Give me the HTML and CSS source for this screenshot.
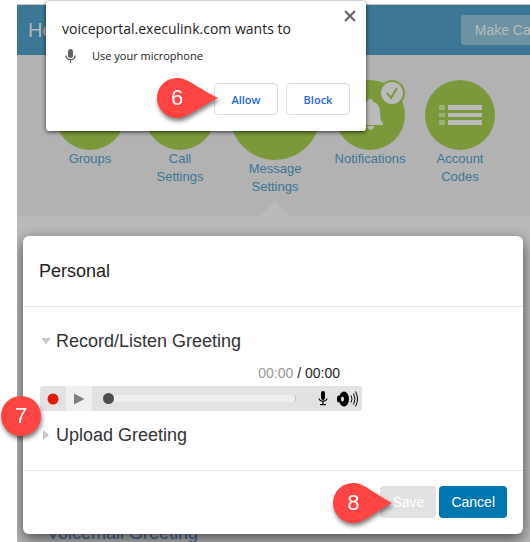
FILE: index.html
```html
<!DOCTYPE html>
<html lang="en">
<head>
    <meta charset="UTF-8">
    <title>Voice Portal: Message Settings</title>
    <meta name="viewport" content="width=device-width, initial-scale=1">
    <link rel="stylesheet" href="styles.css">
</head>
<body>

<div class="portal">
    <div class="page">
        <header class="topbar">
            <div class="title">Home</div>
            <button class="call-button" type="button">Make Call</button>
        </header>

        <nav class="nav">
            <a class="nav-item" href="#groups">
                <span class="circle"></span>
                Groups
            </a>
            <a class="nav-item" href="#call">
                <span class="circle"></span>
                Call<br>Settings
            </a>
            <a class="nav-item active" href="#message">
                <span class="circle"></span>
                Message<br>Settings
            </a>
            <a class="nav-item" href="#notifications">
                <span class="circle">
                    <svg width="70" height="70" viewBox="0 0 70 70">
                        <path fill="#bababa" d="M35 19c2 0 3 1 3 3c5 1 7 5 7 10c0 7 1 9 3 11v2H22v-2c2-2 3-4 3-11c0-5 2-9 7-10c0-2 1-3 3-3zM32 46h7c0 5-7 5-7 0z"/>
                        <circle cx="57" cy="13" r="12" fill="#bababa" stroke="#7b993a" stroke-width="2"/>
                        <path fill="none" stroke="#7b993a" stroke-width="2" d="M52 13l4 5l6-10"/>
                    </svg>
                </span>
                Notifications
            </a>
            <a class="nav-item" href="#codes">
                <span class="circle">
                    <svg width="70" height="70" viewBox="0 0 70 70">
                        <path fill="#a2b076" d="M14 25h6v5h-6zM14 33h6v4h-6zM14 40h6v5h-6z"/>
                        <path fill="#bababa" d="M23 25h34v5H23zM23 33h34v4H23zM23 40h34v5H23z"/>
                    </svg>
                </span>
                Account<br>Codes
            </a>
        </nav>

        <a class="background-link" href="#voicemail">Voicemail Greeting</a>
    </div>

    <div class="modal" role="dialog" aria-labelledby="modal-title">
        <div class="modal-header" id="modal-title">Personal</div>
        <div class="modal-body">
            <details open>
                <summary>Record/Listen Greeting</summary>
                <div class="time"><span class="elapsed">00:00</span> / 00:00</div>
                <div class="player">
                    <button class="player-button" type="button" aria-label="Record">
                        <svg width="12" height="12" viewBox="0 0 12 12"><circle cx="6" cy="6" r="5.5" fill="#e51b00"/></svg>
                    </button>
                    <button class="player-button play" type="button" aria-label="Play">
                        <svg width="12" height="12" viewBox="0 0 12 12"><path fill="#808080" d="M1 .5L11.500 6L1 11.500z"/></svg>
                    </button>
                    <input class="seek" type="range" min="0" max="100" value="0" aria-label="Position">
                    <svg class="mic" width="10" height="15" viewBox="0 0 10 15">
                        <rect x="3" y="0" width="4" height="9" rx="2"/>
                        <path fill="none" stroke="#000" stroke-width="1.200" d="M1 7.500C1.500 11 8.500 11 9 7.500M5 10v3.500M2 13.700h6"/>
                    </svg>
                    <svg class="speaker" width="22" height="16" viewBox="0 0 22 16">
                        <rect x="0" y="4.500" width="4" height="7" rx="2"/>
                        <ellipse cx="7" cy="8" rx="5" ry="7.500"/>
                        <ellipse cx="5.500" cy="8" rx="1.500" ry="2.500" fill="#e2e2e2"/>
                        <path fill="none" stroke="#000" d="M14 4.500q2 3.500 0 7M16.500 2.500q3 5.500 0 11M18.500 .5q4 7.500 0 15"/>
                    </svg>
                </div>
            </details>
            <details>
                <summary>Upload Greeting</summary>
            </details>
        </div>
        <div class="modal-footer">
            <div class="marked">
                <button class="button" type="button" disabled>Save</button>
                <div class="pin pin-save">
                    <svg width="62" height="42" viewBox="0 0 62 42"><path fill="#ff4444" d="M21 1C32 1 38 9 60 21C38 33 32 41 21 41A20 20 0 0 1 21 1z"/></svg>
                    <span>8</span>
                </div>
            </div>
            <button class="button primary" type="button">Cancel</button>
        </div>
    </div>
</div>

<div class="permission" role="dialog" aria-labelledby="permission-title">
    <button class="close" type="button" aria-label="Close">
        <svg width="12" height="12" viewBox="0 0 12 12"><path stroke="#5f6368" stroke-width="2" d="M1 1l10 10M11 1L1 11"/></svg>
    </button>
    <div class="permission-title" id="permission-title">voiceportal.execulink.com wants to</div>
    <div class="permission-row">
        <svg width="18" height="16" viewBox="0 0 18 16">
            <rect x="6" y="1" width="5" height="9" rx="2.500" fill="#5f6368"/>
            <path fill="none" stroke="#5f6368" stroke-width="1.300" d="M4 7.500c0 5.500 9 5.500 9 0M8.500 11.500V15"/>
        </svg>
        Use your microphone
    </div>
    <div class="permission-actions">
        <div class="marked">
            <button class="permission-button" type="button">Allow</button>
            <div class="pin pin-allow">
                <svg width="62" height="42" viewBox="0 0 62 42"><path fill="#ff4444" d="M21 1C32 1 38 9 62 21C38 33 32 41 21 41A20 20 0 0 1 21 1z"/></svg>
                <span>6</span>
            </div>
        </div>
        <button class="permission-button" type="button">Block</button>
    </div>
</div>

<div class="pin pin-player">
    <svg width="42" height="42" viewBox="0 0 42 42"><circle cx="21" cy="21" r="20" fill="#ff4444"/></svg>
    <span>7</span>
</div>

</body>
</html>
```
FILE: styles.css
```css
* {
    box-sizing: border-box;
}

body {
    margin: 0;
    height: 100vh;
    overflow: hidden;
    background: #fff;
    font-family: "Liberation Sans", Arial, sans-serif;
    font-size: 14px;
    color: #222;
}

button {
    font-family: inherit;
    cursor: pointer;
}

a {
    text-decoration: none;
}

svg {
    display: block;
}

.portal {
    position: relative;
    height: 100vh;
    margin-left: 17px;
    padding-top: 4px;
    overflow: hidden;
}

.page {
    height: 100%;
    min-width: 560px;
    border-top: 1px solid #c8c8c8;
    background: #bababa;
}

.topbar {
    display: flex;
    align-items: center;
    justify-content: space-between;
    height: 50px;
    padding: 0 26px 0 11px;
    background: #3c7795;
    color: #b5b5b5;
}

.title {
    font-size: 20px;
}

.call-button {
    height: 30px;
    padding: 0 14px;
    border: 0;
    border-radius: 3px;
    background: #6c93a4;
    color: #bababa;
    font-size: 14px;
}

.nav {
    display: flex;
    align-items: flex-start;
    height: 161px;
    padding: 25px 0 0 28px;
    background: #b2b2b2;
}

.nav-item {
    width: 90px;
    font-size: 13px;
    line-height: 18px;
    text-align: center;
    color: #3c7795;
}

.circle {
    display: block;
    width: 70px;
    height: 70px;
    margin: 0 auto;
    border-radius: 50%;
    background: #7b993a;
}

.nav-item.active {
    position: relative;
    align-self: stretch;
    width: 100px;
    margin-top: -10px;
}

.active .circle {
    width: 90px;
    height: 90px;
}

.active::after {
    content: "";
    position: absolute;
    bottom: 0;
    left: 35px;
    border: solid transparent;
    border-width: 0 15px 15px;
    border-bottom-color: #bababa;
}

.background-link {
    display: block;
    padding: 307px 0 0 30px;
    font-size: 18px;
    line-height: 20px;
    color: #486b9c;
}

.modal {
    position: absolute;
    top: 236px;
    left: 6px;
    right: 7px;
    border-radius: 6px;
    background: #fff;
    box-shadow: 0 5px 15px rgba(0, 0, 0, 0.6);
}

.modal-header {
    padding: 25px 16px;
    border-bottom: 1px solid #e5e5e5;
    font-size: 18px;
    line-height: 20px;
}

.modal-body {
    padding: 24px 16px 25px;
}

summary {
    display: flex;
    align-items: center;
    font-size: 18px;
    line-height: 20px;
    cursor: pointer;
    color: #333;
}

summary::before {
    content: "";
    width: 6px;
    height: 10px;
    margin: 0 7px 0 4px;
    background: #c8c8c8;
    clip-path: polygon(0 0, 100% 50%, 0 100%);
}

details[open] summary::before {
    width: 10px;
    height: 7px;
    margin: 0 5px 0 2px;
    clip-path: polygon(0 0, 100% 0, 50% 100%);
}

.time {
    width: 301px;
    margin: 12px 0 3px;
    line-height: 20px;
    text-align: right;
    color: #222;
}

.elapsed {
    color: #999;
}

.player {
    display: flex;
    align-items: center;
    width: 322px;
    height: 25px;
    margin: 0 0 14px 1px;
    border-radius: 3px;
    background: #e2e2e2;
}

.player-button {
    display: flex;
    align-items: center;
    justify-content: center;
    width: 26px;
    height: 25px;
    padding: 0;
    border: 0;
    background: none;
}

.player-button.play {
    background: #f0f0f0;
}

.seek {
    -webkit-appearance: none;
    appearance: none;
    flex: 1;
    min-width: 0;
    height: 7px;
    margin: 0 22px 0 11px;
    border-right: 1px solid #bbb;
    border-radius: 4px;
    background: #eee;
}

.seek::-webkit-slider-thumb {
    -webkit-appearance: none;
    width: 11px;
    height: 11px;
    border-radius: 50%;
    background: #4d4d4d;
}

.speaker {
    margin: 0 3px 0 9px;
}

.modal-footer {
    display: flex;
    justify-content: flex-end;
    gap: 3px;
    padding: 15px 16px 16px;
    border-top: 1px solid #e5e5e5;
}

.button {
    height: 32px;
    padding: 0 12px;
    border: 0;
    border-radius: 4px;
    background: #e2e2e2;
    color: #fff;
    font-size: 14px;
}

.button.primary {
    background: #0077b0;
}

.permission {
    position: absolute;
    top: 1px;
    left: 46px;
    width: 320px;
    padding: 18px 16px 16px;
    border-radius: 3px;
    background: #fff;
    box-shadow: 0 1px 4px rgba(0, 0, 0, 0.7);
    font-family: "Open Sans", sans-serif;
}

.close {
    position: absolute;
    top: 9px;
    right: 10px;
    padding: 0;
    border: 0;
    background: none;
}

.permission-title {
    font-size: 14px;
    line-height: 20px;
}

.permission-row {
    display: flex;
    align-items: center;
    gap: 12px;
    margin: 8px 0 18px;
    font-size: 11px;
    line-height: 18px;
}

.permission-actions {
    display: flex;
    justify-content: flex-end;
    gap: 8px;
}

.permission-button {
    width: 64px;
    height: 32px;
    border: 1px solid #dadce0;
    border-radius: 4px;
    background: #fff;
    color: #1a66e8;
    font-size: 11px;
    font-weight: 600;
}

.marked {
    position: relative;
}

/* numbered markers */
.pin {
    position: absolute;
    filter: drop-shadow(1px 3px 2px rgba(0, 0, 0, 0.5));
    pointer-events: none;
}

.pin span {
    position: absolute;
    top: 0;
    left: 0;
    width: 42px;
    font-family: "Liberation Sans", Arial, sans-serif;
    font-size: 22px;
    line-height: 42px;
    text-align: center;
    color: #fff;
}

.pin-allow {
    top: -6px;
    left: -58px;
}

.pin-save {
    top: -4px;
    left: -48px;
}

.pin-player {
    top: 395px;
    left: 0;
}
```
